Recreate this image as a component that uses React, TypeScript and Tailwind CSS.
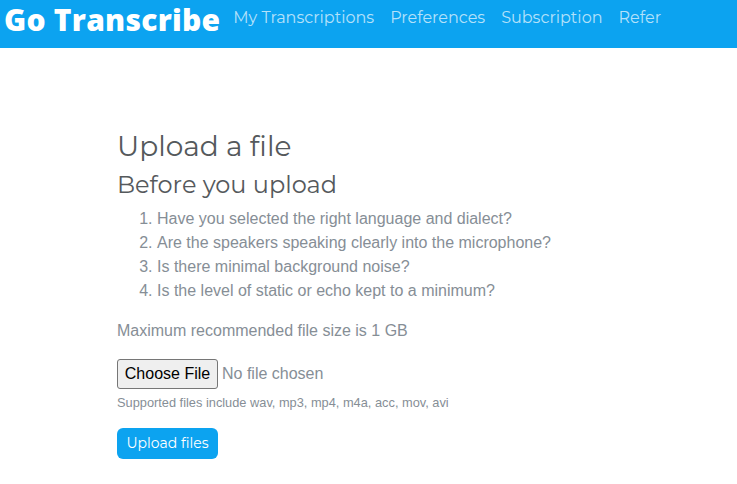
export default function App() {
  return (
    <div className="h-[484px] w-[737px] overflow-hidden bg-white font-['Liberation_Sans',sans-serif] text-[#868e96]">
      <nav className="flex h-12 items-start bg-[#0ca3f0] pl-[4px]">
        <a className="mr-[13px] shrink-0 pt-[3px] font-['Open_Sans',sans-serif] text-[30px] leading-[34px] font-extrabold tracking-[0.25px] whitespace-nowrap text-white">Go Transcribe</a>
        <div className="flex gap-4 pt-[6px] font-['Montserrat',sans-serif] text-base leading-6 text-white/70">
          <a>My Transcriptions</a>
          <a>Preferences</a>
          <a>Subscription</a>
          <a>Refer</a>
        </div>
      </nav>
      <main className="pt-[79px] pl-[117px]">
        <h1 className="font-['Montserrat',sans-serif] text-[28px] leading-[38px] text-[#55595c]">Upload a file</h1>
        <h2 className="mt-[5px] font-['Montserrat',sans-serif] text-2xl leading-[29px] text-[#55595c]">Before you upload</h2>
        <ol className="mt-2 list-decimal pl-10 text-base leading-6">
          <li>Have you selected the right language and dialect?</li>
          <li>Are the speakers speaking clearly into the microphone?</li>
          <li>Is there minimal background noise?</li>
          <li>Is the level of static or echo kept to a minimum?</li>
        </ol>
        <p className="mt-4 text-base leading-6">Maximum recommended file size is 1 GB</p>
        <div className="mt-4 flex items-center text-base">
          <button className="h-[30px] w-[101px] rounded-[3px] border border-[#767676] bg-[#efefef] text-black">Choose File</button>
          <span className="ml-1">No file chosen</span>
        </div>
        <p className="mt-1 text-[12.8px] leading-5">Supported files include wav, mp3, mp4, m4a, acc, mov, avi</p>
        <button className="mt-[15px] block h-[31px] w-[101px] rounded-md bg-[#0ca3f0] pb-[2px] font-['Montserrat',sans-serif] text-sm text-white">Upload files</button>
      </main>
    </div>
  )
}
